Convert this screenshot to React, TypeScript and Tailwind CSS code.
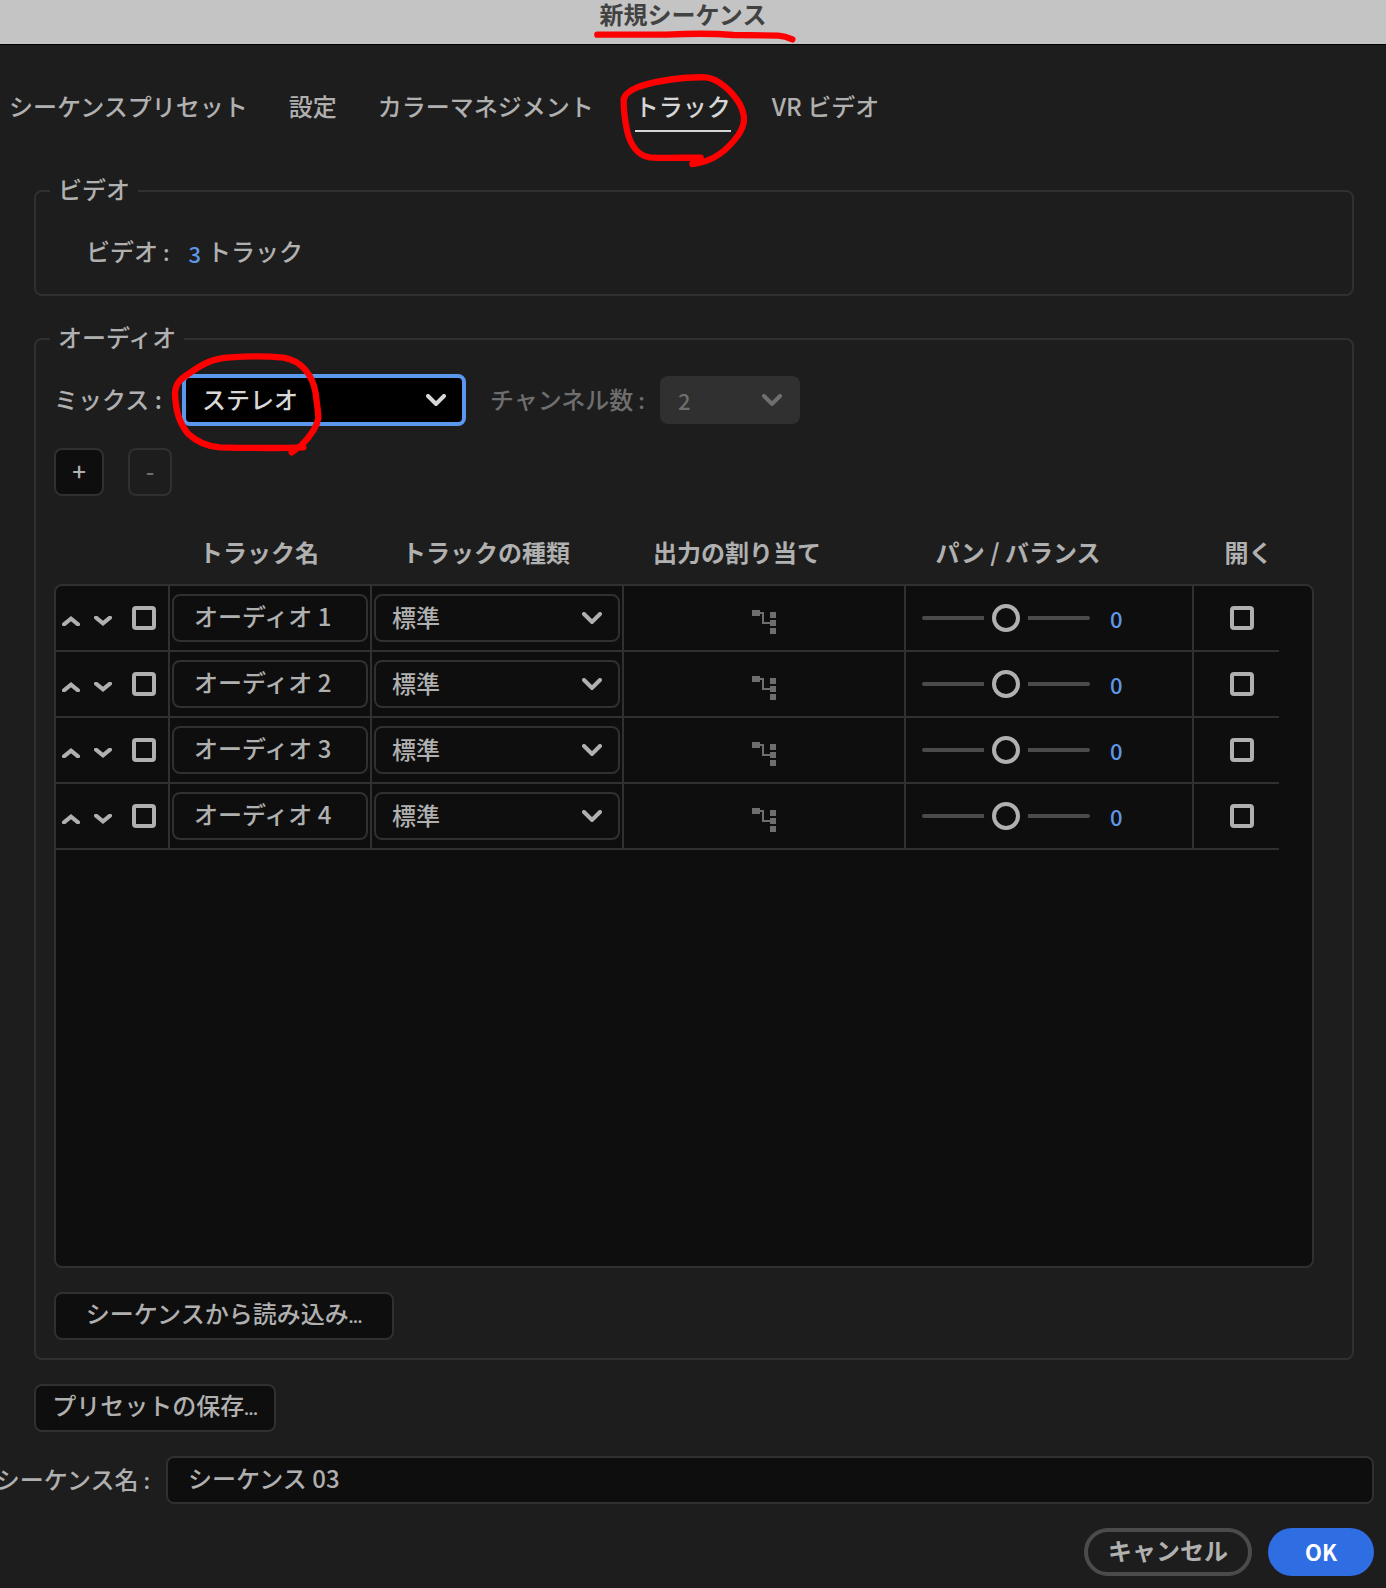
import React, { useState } from "react";

const tabs = ["シーケンスプリセット", "設定", "カラーマネジメント", "トラック"];
const initialTracks = [1, 2, 3, 4].map((n) => ({ id: n, name: `オーディオ ${n}` }));

function Chevron({ className }: { className?: string }) {
  return (
    <svg viewBox="0 0 20 12" fill="none" stroke="currentColor" strokeWidth="4" strokeLinecap="round" className={className} aria-hidden="true">
      <path d="M2 2 L10 10 L18 2" strokeLinejoin="miter" />
    </svg>
  );
}

function SmallChevron({ up = false }: { up?: boolean }) {
  return (
    <svg viewBox="0 0 18 10" fill="none" stroke="currentColor" strokeWidth="4" strokeLinecap="round" className="h-[10px] w-[18px]" aria-hidden="true">
      <path d={up ? "M2 8.4 L9 2.6 L16 8.4" : "M2 1.6 L9 7.4 L16 1.6"} />
    </svg>
  );
}

function RoutingIcon() {
  return (
    <svg viewBox="0 0 24 24" fill="#6e6e6e" className="h-6 w-6" shapeRendering="crispEdges" aria-hidden="true">
      <rect x="0" y="0" width="8" height="6" />
      <path d="M8 2h4v10h6v2h-8V4H8z" />
      <rect x="18" y="2" width="6" height="6" />
      <rect x="18" y="10" width="6" height="6" />
      <rect x="18" y="18" width="6" height="6" />
    </svg>
  );
}

function Marker({ d, viewBox, className }: { d: string; viewBox: string; className: string }) {
  return (
    <svg
      viewBox={viewBox}
      fill="none"
      stroke="#ff0000"
      strokeWidth="19"
      strokeLinecap="round"
      strokeLinejoin="round"
      className={`pointer-events-none absolute z-10 max-w-none ${className}`}
      aria-hidden="true"
    >
      <path d={d} />
    </svg>
  );
}

function Checkbox({ label }: { label: string }) {
  return (
    <input
      type="checkbox"
      aria-label={label}
      className="block h-6 w-6 shrink-0 appearance-none rounded border-4 border-[#b0b0b0] checked:bg-[#b0b0b0]"
    />
  );
}

function TrackRow({ id, name }: { id: number; name: string }) {
  const [pan, setPan] = useState(0);
  const cell = "h-[66px] border-b-2 border-[#303030] p-0";
  return (
    <tr>
      <td className={`${cell} border-r-2`}>
        <div className="flex items-center pl-[6px]">
          <button type="button" aria-label={`${name} を上へ`} className="mt-[6px] mr-[14px]">
            <SmallChevron up />
          </button>
          <button type="button" aria-label={`${name} を下へ`} className="mt-[6px] mr-5">
            <SmallChevron />
          </button>
          <Checkbox label={`${name} を選択`} />
        </div>
      </td>
      <td className={`${cell} border-r-2 px-[2px]`}>
        <input
          type="text"
          defaultValue={name}
          aria-label={`トラック名 ${id}`}
          className="block h-12 w-full rounded-lg border-2 border-[#303030] bg-[#0e0e0e] px-5 pb-[6px]"
        />
      </td>
      <td className={`${cell} border-r-2 px-[2px]`}>
        <div className="relative">
          <select aria-label={`トラックの種類 ${id}`} className="block h-12 w-full appearance-none rounded-lg border-2 border-[#303030] bg-[#0e0e0e] px-4 pb-[2px]">
            <option>標準</option>
            <option>5.1</option>
            <option>モノラル</option>
          </select>
          <Chevron className="pointer-events-none absolute top-[18px] right-[18px] h-3 w-5" />
        </div>
      </td>
      <td className={`${cell} border-r-2`}>
        <button type="button" aria-label={`${name} の出力の割り当て`} className="mx-auto mt-2 block">
          <RoutingIcon />
        </button>
      </td>
      <td className={`${cell} border-r-2`}>
        <div className="flex items-center pl-4">
          <input
            type="range"
            min={-100}
            max={100}
            value={pan}
            onChange={(e) => setPan(Number(e.target.value))}
            aria-label={`${name} のパン / バランス`}
            className="h-7 w-[168px] appearance-none bg-transparent [&::-webkit-slider-runnable-track]:h-1 [&::-webkit-slider-runnable-track]:rounded-full [&::-webkit-slider-runnable-track]:bg-[#4b4b4b] [&::-webkit-slider-thumb]:-mt-3 [&::-webkit-slider-thumb]:h-7 [&::-webkit-slider-thumb]:w-7 [&::-webkit-slider-thumb]:appearance-none [&::-webkit-slider-thumb]:rounded-full [&::-webkit-slider-thumb]:border-4 [&::-webkit-slider-thumb]:border-solid [&::-webkit-slider-thumb]:border-[#b0b0b0] [&::-webkit-slider-thumb]:bg-[#0e0e0e] [&::-webkit-slider-thumb]:shadow-[0_0_0_8px_#0e0e0e]"
          />
          <button type="button" className="ml-5 text-[22px] text-[#5f97e6]">
            {pan}
          </button>
        </div>
      </td>
      <td className={`${cell} pl-9`}>
        <Checkbox label={`${name} を開く`} />
      </td>
    </tr>
  );
}

export default function App() {
  return (
    <div className="min-h-screen bg-[#1d1d1d] pb-3 font-['Noto_Sans_CJK_JP',sans-serif] text-[24px] leading-9 font-medium text-[#b0b0b0]">
      <header className="flex h-[45px] items-start justify-center border-b border-black bg-[#c4c4c4] pr-5">
        <h1 className="relative text-[24px] leading-7 font-bold text-[#424242]">
          新規シーケンス
          <Marker
            viewBox="90 90 630 45"
            className="top-[29px] -left-[10px] h-[15px] w-[210px]"
            d="M112 107 H320 C400 103 460 103 520 108 L655 110 Q675 111 697 121"
          />
        </h1>
      </header>

      <nav className="flex gap-[41px] pt-[43px] pl-[9px]" role="tablist">
        {tabs.map((tab) => (
          <button
            key={tab}
            type="button"
            role="tab"
            aria-selected={tab === "トラック"}
            className="relative border-b-2 border-transparent pb-[6px] whitespace-nowrap aria-selected:border-[#d6d6d6] aria-selected:text-[#d6d6d6]"
          >
            {tab}
            {tab === "トラック" && (
              <Marker
                viewBox="180 210 399 300"
                className="-top-[18px] -left-4 h-[100px] w-[133px]"
                d="M425 473 C360 473 310 475 272 472 C235 467 214 432 205 395 C196 355 194 330 194 300 C195 282 215 270 240 260 C290 242 380 230 440 232 C478 235 520 275 541 310 C562 350 558 375 538 405 C505 450 465 485 400 492"
              />
            )}
          </button>
        ))}
        <button type="button" role="tab" aria-selected={false} className="border-b-2 border-transparent pb-[6px] whitespace-nowrap">
          VR ビデオ
        </button>
      </nav>

      <main>
        <fieldset className="mt-[39px] mr-8 ml-[34px] rounded-lg border-2 border-[#303030] pt-[22px] pb-[25px] pl-[50px]">
          <legend className="-ml-9 px-2 pb-1">ビデオ</legend>
          <div className="flex">
            <span>
              ビデオ<span className="text-[22px]"> :</span>
            </span>
            <button type="button" className="mt-[2px] ml-[19px] -mb-[2px] text-[22px] text-[#5f97e6]">
              3
            </button>
            <span className="ml-[6px]">トラック</span>
          </div>
        </fieldset>

        <fieldset className="mt-[23px] mr-8 ml-[34px] rounded-lg border-2 border-[#303030] pt-[15px] pr-[38px] pb-[18px] pl-[18px]">
          <legend className="-ml-1 px-2 pb-1">オーディオ</legend>
          <div className="flex items-center">
            <label htmlFor="mix" className="w-32 pb-[3px] whitespace-nowrap">
              ミックス<span> :</span>
            </label>
            <div className="relative w-[284px]">
              <select id="mix" className="block h-[52px] w-full appearance-none rounded-lg border-4 border-[#5998ec] bg-black px-4 pb-[2px] text-[#d8d8d8] outline-none">
                <option>ステレオ</option>
                <option>5.1</option>
                <option>マルチチャンネル</option>
                <option>モノラル</option>
              </select>
              <Chevron className="pointer-events-none absolute top-5 right-5 h-3 w-5 text-[#d8d8d8]" />
              <Marker
                viewBox="510 90 465 330"
                className="-top-6 -left-3 h-[110px] w-[155px]"
                d="M910 382 C820 386 740 384 660 382 C620 380 590 365 563 340 C535 305 528 270 525 225 C525 190 540 178 565 162 C610 130 640 115 690 112 C750 108 800 108 850 113 C905 122 938 165 947 220 C950 250 955 270 955 295 C950 325 930 350 905 375 L875 397"
              />
            </div>
            <label htmlFor="channels" className="ml-6 w-[170px] pb-[3px] whitespace-nowrap text-[#6e6e6e]">
              チャンネル数<span className="text-[22px]"> :</span>
            </label>
            <div className="relative w-[140px] text-[#6e6e6e]">
              <select id="channels" disabled className="block h-12 w-full appearance-none rounded-lg bg-[#303030] px-[18px] text-[22px] opacity-100">
                <option>2</option>
              </select>
              <Chevron className="pointer-events-none absolute top-[18px] right-[18px] h-3 w-5" />
            </div>
          </div>

          <div className="mt-[22px] flex gap-6">
            <button type="button" aria-label="トラックを追加" className="h-12 w-[50px] rounded-lg border-2 border-[#303030] bg-[#0e0e0e] pb-[2px]">
              +
            </button>
            <button type="button" disabled aria-label="トラックを削除" className="h-12 w-11 rounded-lg border-2 border-[#303030] pb-[2px] text-[#6e6e6e]">
              -
            </button>
          </div>

          <div className="mt-[38px] grid grid-cols-1">
            <div className="mt-[50px] min-h-[684px] rounded-lg border-2 border-[#303030] bg-[#0e0e0e] [grid-area:1/1]" />
            <div className="mr-[35px] ml-[2px] self-start [grid-area:1/1]">
              <table className="w-full table-fixed border-separate border-spacing-0">
                <colgroup>
                  <col className="w-[114px]" />
                  <col className="w-[202px]" />
                  <col className="w-[252px]" />
                  <col />
                  <col className="w-[288px]" />
                  <col className="w-[85px]" />
                </colgroup>
                <thead>
                  <tr className="h-[52px]">
                    <th className="p-0" aria-label="操作" />
                    <th className="p-0 pr-6 pb-4 whitespace-nowrap">トラック名</th>
                    <th className="p-0 pr-6 pb-4 whitespace-nowrap">トラックの種類</th>
                    <th className="p-0 pr-14 pb-4 whitespace-nowrap">出力の割り当て</th>
                    <th className="p-0 pr-16 pb-4 whitespace-nowrap">パン / バランス</th>
                    <th className="p-0 pl-6 pb-4 whitespace-nowrap">開く</th>
                  </tr>
                </thead>
                <tbody>
                  {initialTracks.map((t) => (
                    <TrackRow key={t.id} id={t.id} name={t.name} />
                  ))}
                </tbody>
              </table>
            </div>
          </div>

          <button type="button" className="mt-6 flex h-12 w-[340px] justify-center rounded-lg border-2 border-[#303030] bg-[#0e0e0e] pt-px">
            <span>
              シーケンスから読み込み<span className="font-['Noto_Sans'] text-[16px] font-bold">...</span>
            </span>
          </button>
        </fieldset>

        <button type="button" className="mt-6 ml-[34px] flex h-12 w-[242px] justify-center rounded-lg border-2 border-[#303030] bg-[#0e0e0e] pt-px">
          <span>
            プリセットの保存<span className="font-['Noto_Sans'] text-[16px] font-bold">...</span>
          </span>
        </button>

        <div className="mt-6 flex items-center pr-3">
          <label htmlFor="sequence-name" className="flex w-[166px] shrink-0 justify-end pr-4 pb-[3px] whitespace-nowrap">
            <span>
              シーケンス名<span className="text-[22px]"> :</span>
            </span>
          </label>
          <input
            id="sequence-name"
            type="text"
            defaultValue="シーケンス 03"
            className="block h-12 min-w-0 flex-1 rounded-lg border-2 border-[#303030] bg-[#0e0e0e] px-5 pb-[6px]"
          />
        </div>
      </main>

      <footer className="mt-6 flex justify-end gap-4 pr-3 font-bold">
        <button type="button" className="h-12 w-[168px] rounded-full border-4 border-[#4b4b4b] pb-1">
          キャンセル
        </button>
        <button type="button" className="h-12 w-[106px] rounded-full bg-[#2f6de3] pb-[3px] text-[22px] text-white">
          OK
        </button>
      </footer>
    </div>
  );
}
